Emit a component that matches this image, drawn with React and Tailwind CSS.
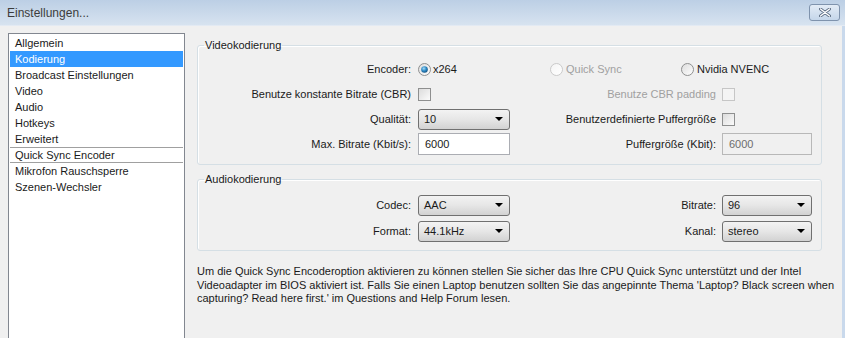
import React from 'react';

const font = { fontFamily: '"Liberation Sans", Arial, sans-serif' };

const items = [
  'Allgemein',
  'Kodierung',
  'Broadcast Einstellungen',
  'Video',
  'Audio',
  'Hotkeys',
  'Erweitert',
];

const Radio = ({ checked, disabled }) => (
  <svg width="13" height="13" viewBox="0 0 13 13" className="shrink-0">
    <defs>
      <linearGradient id={`rg${disabled ? 'd' : ''}`} x1="0" y1="0" x2="1" y2="1">
        <stop offset="0" stopColor={disabled ? '#f4f4f4' : '#dcdcdc'} />
        <stop offset="1" stopColor="#ffffff" />
      </linearGradient>
      <radialGradient id="rdot" cx="0.4" cy="0.35" r="0.7">
        <stop offset="0" stopColor="#a9dcf6" />
        <stop offset="0.5" stopColor="#2f8cc8" />
        <stop offset="1" stopColor="#134f7e" />
      </radialGradient>
    </defs>
    <circle cx="6.5" cy="6.5" r="6" fill={`url(#rg${disabled ? 'd' : ''})`} stroke={disabled ? '#c9c9c9' : '#8e8f8f'} />
    {checked && <circle cx="6.5" cy="6.5" r="3.3" fill="url(#rdot)" />}
  </svg>
);

const Checkbox = ({ disabled }) => (
  <span
    className={`block w-[13px] h-[13px] border ${
      disabled ? 'border-[#c6c6c6] bg-[#f4f4f4]' : 'border-[#8e8f8f] bg-gradient-to-br from-[#dcdcdc] to-[#fbfbfb]'
    }`}
  />
);

const Combo = ({ value }) => (
  <div className="h-[21px] w-full rounded-[3px] border border-[#707070] bg-gradient-to-b from-[#f3f3f3] via-[#e6e6e6] to-[#d2d2d2] flex items-center justify-between pl-[5px] pr-[6px]">
    <span>{value}</span>
    <svg width="8" height="4" viewBox="0 0 8 4">
      <path d="M0 0 H8 L4 4 Z" fill="#000" />
    </svg>
  </div>
);

const TextBox = ({ value, disabled }) => (
  <div
    className={`h-[22px] w-full border flex items-center pl-[6px] ${
      disabled ? 'border-[#b8b8b8] bg-[#f0f0f0] text-[#6d6d6d]' : 'border-[#abadb3] bg-white'
    }`}
  >
    {value}
  </div>
);

const Row = ({ label, control, label2, control2, dim2 }) => (
  <div className="h-[22px] flex items-center">
    <div className="w-[213px] text-right whitespace-nowrap">{label}</div>
    <div className="ml-[7px] w-[92px] flex items-center">{control}</div>
    <div className={`w-[206px] text-right whitespace-nowrap ${dim2 ? 'text-[#a0a0a0]' : ''}`}>{label2}</div>
    <div className="ml-[6px] w-[90px] flex items-center">{control2}</div>
  </div>
);

export default function App() {
  return (
    <div className="w-[845px] h-[338px] overflow-hidden flex flex-col bg-[#f0f0f0] text-[11px] text-[#1a1a1a]" style={font}>
      {/* Title bar */}
      <div className="h-[26px] shrink-0 flex items-center justify-between pl-[7px] pr-[5px] bg-gradient-to-b from-[#bccfe5] to-[#d7e3f0] border-b border-[#e3eaf3]">
        <span className="text-[12px] text-[#3c3c3c]">Einstellungen...</span>
        <div className="w-[31px] h-[17px] rounded-[3px] border border-[#7f93ad] bg-gradient-to-b from-[#e3ecf6] to-[#c5d6ea] flex items-center justify-center">
          <svg width="12" height="9" viewBox="0 0 12 9">
            <path d="M1.5 1 L10.5 8 M10.5 1 L1.5 8" stroke="#5a6a80" strokeWidth="3" strokeLinecap="round" />
            <path d="M1.5 1 L10.5 8 M10.5 1 L1.5 8" stroke="#ffffff" strokeWidth="1.4" strokeLinecap="round" />
          </svg>
        </div>
      </div>

      <div className="flex-1 flex min-h-0">
        <div className="flex-1 flex pl-[8px] pt-[7px]">
          {/* Category list */}
          <div className="w-[177px] h-[320px] shrink-0 bg-white border border-[#828790] p-[1px]">
            {items.map((it) => (
              <div
                key={it}
                className={`h-[16px] flex items-center pl-[5px] whitespace-nowrap ${
                  it === 'Kodierung' ? 'bg-[#3399ff] text-white' : ''
                }`}
              >
                {it}
              </div>
            ))}
            <div className="h-[16px] flex items-center pl-[5px] border-y border-[#a0a0a0]">Quick Sync Encoder</div>
            <div className="h-[16px] flex items-center pl-[5px]">Mikrofon Rauschsperre</div>
            <div className="h-[16px] flex items-center pl-[5px]">Szenen-Wechsler</div>
          </div>

          {/* Settings panel */}
          <div className="ml-[12px] w-[625px] flex flex-col mt-[5px]">
            <fieldset className="border border-[#d5dfe5] rounded-[3px] pb-[9px] shadow-[inset_1px_1px_0_#fff]">
              <legend className="ml-[6px] px-[1px] leading-[15px]">Videokodierung</legend>
              <div className="pt-[5px] flex flex-col gap-[3px]">
                <div className="h-[22px] flex items-center">
                  <div className="w-[213px] text-right">Encoder:</div>
                  <div className="ml-[7px] w-[132px] flex items-center gap-[2px]">
                    <Radio checked />
                    <span>x264</span>
                  </div>
                  <div className="w-[131px] flex items-center gap-[3px] text-[#a0a0a0]">
                    <Radio disabled />
                    <span>Quick Sync</span>
                  </div>
                  <div className="flex items-center gap-[3px]">
                    <Radio />
                    <span>Nvidia NVENC</span>
                  </div>
                </div>
                <Row
                  label="Benutze konstante Bitrate (CBR)"
                  control={<Checkbox />}
                  label2="Benutze CBR padding"
                  control2={<Checkbox disabled />}
                  dim2
                />
                <Row
                  label="Qualität:"
                  control={<Combo value="10" />}
                  label2="Benutzerdefinierte Puffergröße"
                  control2={<Checkbox />}
                />
                <Row
                  label="Max. Bitrate (Kbit/s):"
                  control={<TextBox value="6000" />}
                  label2="Puffergröße (Kbit):"
                  control2={<TextBox value="6000" disabled />}
                />
              </div>
            </fieldset>

            <fieldset className="mt-[7px] border border-[#d5dfe5] rounded-[3px] pb-[8px] shadow-[inset_1px_1px_0_#fff]">
              <legend className="ml-[6px] px-[1px] leading-[15px]">Audiokodierung</legend>
              <div className="pt-[7px] flex flex-col gap-[4px]">
                <Row label="Codec:" control={<Combo value="AAC" />} label2="Bitrate:" control2={<Combo value="96" />} />
                <Row label="Format:" control={<Combo value="44.1kHz" />} label2="Kanal:" control2={<Combo value="stereo" />} />
              </div>
            </fieldset>

            <p className="mt-[14px] leading-[13.5px] whitespace-nowrap">
              Um die Quick Sync Encoderoption aktivieren zu können stellen Sie sicher das Ihre CPU Quick Sync unterstützt und der Intel
              <br />
              Videoadapter im BIOS aktiviert ist. Falls Sie einen Laptop benutzen sollten Sie das angepinnte Thema 'Laptop? Black screen when
              <br />
              capturing? Read here first.' im Questions and Help Forum lesen.
            </p>
          </div>
        </div>
        <div className="w-[3px] shrink-0 bg-[#c9d9ec]" />
      </div>
    </div>
  );
}
